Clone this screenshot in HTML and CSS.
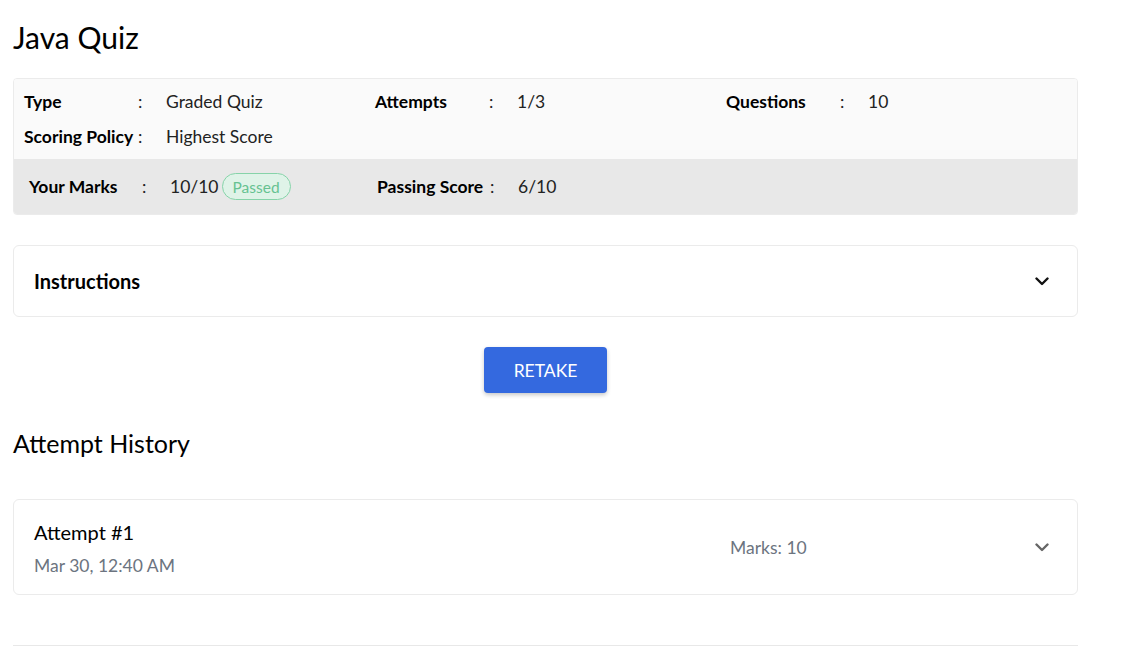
FILE: index.html
```html
<!DOCTYPE html>
<html lang="en">
<head>
<meta charset="utf-8">
<title>Java Quiz</title>
<link rel="stylesheet" href="styles.css">
</head>
<body>
<main class="page">
  <h1 class="title">Java Quiz</h1>

  <section class="info-card">
    <div class="info-top">
      <div class="info-item"><span class="lbl">Type</span><span class="colon">:</span><span class="val">Graded Quiz</span></div>
      <div class="info-item"><span class="lbl">Attempts</span><span class="colon">:</span><span class="val">1/3</span></div>
      <div class="info-item"><span class="lbl">Questions</span><span class="colon">:</span><span class="val">10</span></div>
      <div class="info-item"><span class="lbl">Scoring Policy</span><span class="colon">:</span><span class="val">Highest Score</span></div>
    </div>
    <div class="info-bottom">
      <div class="info-item"><span class="lbl lbl-b">Your Marks</span><span class="colon">:</span><span class="val">10/10</span><span class="badge">Passed</span></div>
      <div class="info-item"><span class="lbl lbl-b">Passing Score</span><span class="colon">:</span><span class="val">6/10</span></div>
    </div>
  </section>

  <section class="panel instructions">
    <span class="panel-title">Instructions</span>
    <svg class="chev" width="14" height="9" viewBox="0 0 14 9"><polyline points="1.5,1.5 7,7 12.5,1.5" fill="none" stroke="#111" stroke-width="2.4" stroke-linecap="round" stroke-linejoin="round"/></svg>
  </section>

  <div class="actions">
    <button class="btn">RETAKE</button>
  </div>

  <h2 class="subtitle">Attempt History</h2>

  <section class="panel attempt">
    <div class="attempt-main">
      <div class="attempt-name">Attempt #1</div>
      <div class="attempt-date">Mar 30, 12:40 AM</div>
    </div>
    <div class="attempt-marks">Marks: 10</div>
    <svg class="chev chev-up" width="14" height="9" viewBox="0 0 14 9"><polyline points="1.5,1.5 7,7 12.5,1.5" fill="none" stroke="#666" stroke-width="2.4" stroke-linecap="round" stroke-linejoin="round"/></svg>
  </section>

  <hr class="divider">
</main>
</body>
</html>
```

FILE: styles.css
```css
* { box-sizing: border-box; }
html, body { margin: 0; padding: 0; background: #fff; }
body {
  font-family: Lato, "Open Sans", "Liberation Sans", sans-serif;
  color: #111;
}
.page {
  width: 1091px;
  padding: 0 13px;
}
.title {
  margin: 19px 0 23px;
  font-size: 30px;
  line-height: 36px;
  font-weight: 400;
  color: #000;
}
.info-card {
  border: 1px solid #ebebeb;
  border-radius: 4px;
  overflow: hidden;
}
.info-top {
  background: #fafafa;
  padding: 5px 10px 5px;
  display: grid;
  grid-template-columns: 351px 351px 351px;
}
.info-item {
  display: flex;
  align-items: center;
  height: 35px;
  font-size: 17.5px;
}
.lbl {
  width: 114px;
  font-weight: 700;
  color: #000;
}
.colon { width: 28px; color: #222; }
.val { color: #222; }
.info-bottom {
  background: #e8e8e8;
  padding: 10px 15px 10px;
  display: grid;
  grid-template-columns: 348px 348px;
}
.lbl-b { width: 113px; }
.badge {
  margin-left: 3px;
  height: 27px;
  padding: 0 10px;
  display: inline-flex;
  align-items: center;
  border: 1px solid #86d3a9;
  border-radius: 14px;
  background: #dff3e8;
  color: #66c291;
  font-size: 15.5px;
}
.panel {
  border: 1px solid #ebebeb;
  border-radius: 6px;
  display: flex;
  align-items: center;
  padding: 0 28px 0 20px;
}
.instructions {
  margin-top: 30px;
  height: 72px;
  justify-content: space-between;
}
.panel-title {
  font-size: 20px;
  font-weight: 700;
  color: #000;
}
.chev { display: block; }
.actions {
  margin-top: 30px;
  display: flex;
  justify-content: center;
}
.btn {
  height: 46px;
  padding: 0 30px;
  border: none;
  border-radius: 4px;
  background: #3469df;
  color: #fff;
  font-family: Lato, "Open Sans", "Liberation Sans", sans-serif;
  font-size: 17.5px;
  box-shadow: 0 2px 4px rgba(0,0,0,0.22);
}
.subtitle {
  margin: 35px 0 40px;
  font-size: 25px;
  line-height: 31px;
  font-weight: 400;
  color: #000;
}
.attempt {
  padding: 20px 28px 16px 20px;
}
.attempt-main { width: 696px; }
.attempt-name {
  font-size: 20px;
  line-height: 24px;
  color: #000;
}
.attempt-date {
  margin-top: 10px;
  font-size: 17.5px;
  line-height: 24px;
  color: #6c7480;
}
.attempt-marks {
  flex: 1;
  font-size: 17.5px;
  color: #6c7480;
  margin-bottom: 4px;
}
.chev-up { margin-bottom: 4px; }
.divider {
  margin: 50px 0 0;
  border: none;
  border-top: 1px solid #e8e8e8;
}
```
